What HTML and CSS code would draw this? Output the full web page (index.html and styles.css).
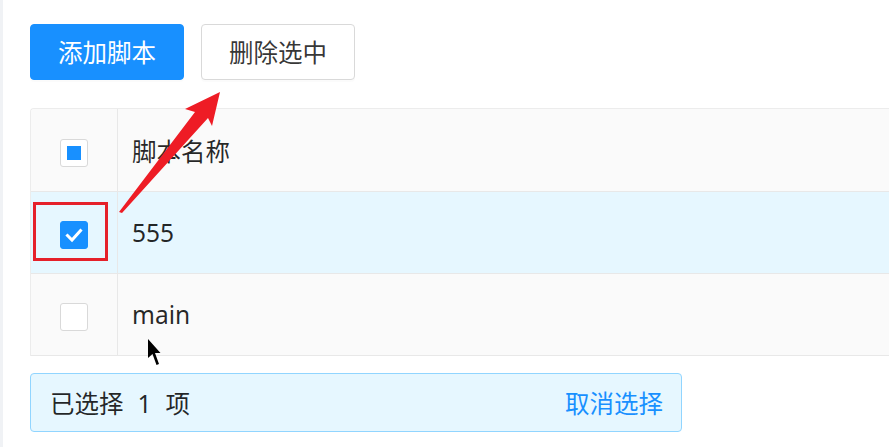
FILE: index.html
```html
<!DOCTYPE html>
<html lang="zh-CN">
<head>
	<meta charset="UTF-8">
	<title>脚本管理</title>
	<link rel="stylesheet" href="styles.css">
</head>
<body>
<div class="layout">
	<div class="sider-edge"></div>
	<div class="content">
		<div class="toolbar">
			<button class="btn btn-primary">添加脚本</button>
			<button class="btn">删除选中</button>
		</div>

		<div class="table-wrap">
			<table class="script-table">
				<thead>
					<tr>
						<th class="col-check"><span class="checkbox indeterminate"></span></th>
						<th>脚本名称</th>
					</tr>
				</thead>
				<tbody>
					<tr class="row-selected">
						<td class="col-check">
							<span class="checkbox checked">
								<svg width="28" height="28" viewBox="0 0 28 28"><polyline points="7.5,14.5 12,19 20.5,9.5" fill="none" stroke="#fff" stroke-width="3" stroke-linecap="square"/></svg>
							</span>
						</td>
						<td>555</td>
					</tr>
					<tr class="row-hover">
						<td class="col-check"><span class="checkbox"></span></td>
						<td>main</td>
					</tr>
				</tbody>
			</table>
		</div>

		<div class="alert">
			<span>已选择<span class="count">1</span>项</span>
			<a class="alert-link">取消选择</a>
		</div>
	</div>
</div>

<!-- 标注：红框 + 箭头 + 鼠标 -->
<div class="annot-box"></div>
<svg class="annot-arrow" width="889" height="447">
	<polygon points="119,212 195,112 185,109 220,92 212,126 208,118 122,213" fill="#ee1c25"/>
</svg>
<svg class="cursor" width="14" height="28" viewBox="0 0 14 28">
	<polygon points="0,0 0,19 4.5,15 8.5,26 11,25 7,14 12.5,14" fill="#000"/>
</svg>
</body>
</html>
```

FILE: styles.css
```css
html, body {
  margin: 0;
  overflow: hidden;
  background: #fff;
  font-family: "Noto Sans", "Noto Sans CJK SC", sans-serif;
  color: rgba(0, 0, 0, .85);
}

.layout {
  display: flex;
  width: 889px;
  height: 447px;
}
.sider-edge {
  width: 3px;
  background: #f0f2f5;
  flex: none;
}
.content {
  flex: 1;
  min-width: 0;
  padding: 24px 0 0 27px;
}

.toolbar {
  display: flex;
  gap: 17px;
}
.btn {
  height: 56px;
  width: 154px;
  padding: 0;
  border: 1px solid #d9d9d9;
  border-radius: 4px;
  background: #fff;
  color: rgba(0, 0, 0, .8);
  font-family: "Noto Sans CJK SC", sans-serif;
  font-size: 24.5px;
  line-height: 1;
  box-shadow: 0 2px 0 rgba(0, 0, 0, .015);
}
.btn-primary {
  background: #1890ff;
  border-color: #1890ff;
  color: #fff;
}

.table-wrap {
  margin-top: 28px;
}
.script-table {
  width: 100%;
  border-collapse: separate;
  border-spacing: 0;
  border-top: 1px solid #ececec;
  border-left: 1px solid #ececec;
  border-radius: 4px 0 0 0;
  font-size: 24.5px;
}
.script-table th,
.script-table td {
  text-align: left;
  font-weight: normal;
  padding: 0 0 0 14px;
  border-bottom: 1px solid #e8e8e8;
}
.script-table th {
  height: 82px;
  background: #fafafa;
}
.script-table td {
  height: 81px;
}
.script-table .col-check {
  width: 87px;
  padding: 0;
  text-align: center;
  border-right: 1px solid #e8e8e8;
  box-sizing: border-box;
}
.script-table th.col-check {
  border-top-left-radius: 4px;
}
.row-selected td {
  background: #e6f7ff;
}
.row-hover td {
  background: #fafafa;
}

.checkbox {
  display: inline-block;
  vertical-align: middle;
  position: relative;
  width: 28px;
  height: 28px;
  box-sizing: border-box;
  border: 1px solid #d9d9d9;
  border-radius: 3px;
  background: #fff;
}
.checkbox.indeterminate::after {
  content: "";
  position: absolute;
  left: 6px;
  top: 6px;
  width: 14px;
  height: 14px;
  background: #1890ff;
}
.checkbox.checked {
  background: #1890ff;
  border-color: #1890ff;
}
.checkbox svg {
  position: absolute;
  left: -1px;
  top: -1px;
}

.alert {
  margin-top: 17px;
  width: 652px;
  height: 59px;
  box-sizing: border-box;
  display: flex;
  align-items: center;
  justify-content: space-between;
  padding: 0 18px 0 19px;
  background: #e6f7ff;
  border: 1px solid #91d5ff;
  border-radius: 4px;
  font-family: "Noto Sans CJK SC", sans-serif;
  font-size: 24.5px;
}
.alert .count {
  margin: 0 14px;
  font-family: "Noto Sans", sans-serif;
}
.alert-link {
  color: #1890ff;
  cursor: pointer;
}

/* 标注层 */
.annot-box {
  position: absolute;
  left: 33px;
  top: 202px;
  width: 75px;
  height: 59px;
  box-sizing: border-box;
  border: 3px solid #e5202a;
}
.annot-arrow {
  position: absolute;
  left: 0;
  top: 0;
  pointer-events: none;
}
.cursor {
  position: absolute;
  left: 148px;
  top: 339px;
}
```
